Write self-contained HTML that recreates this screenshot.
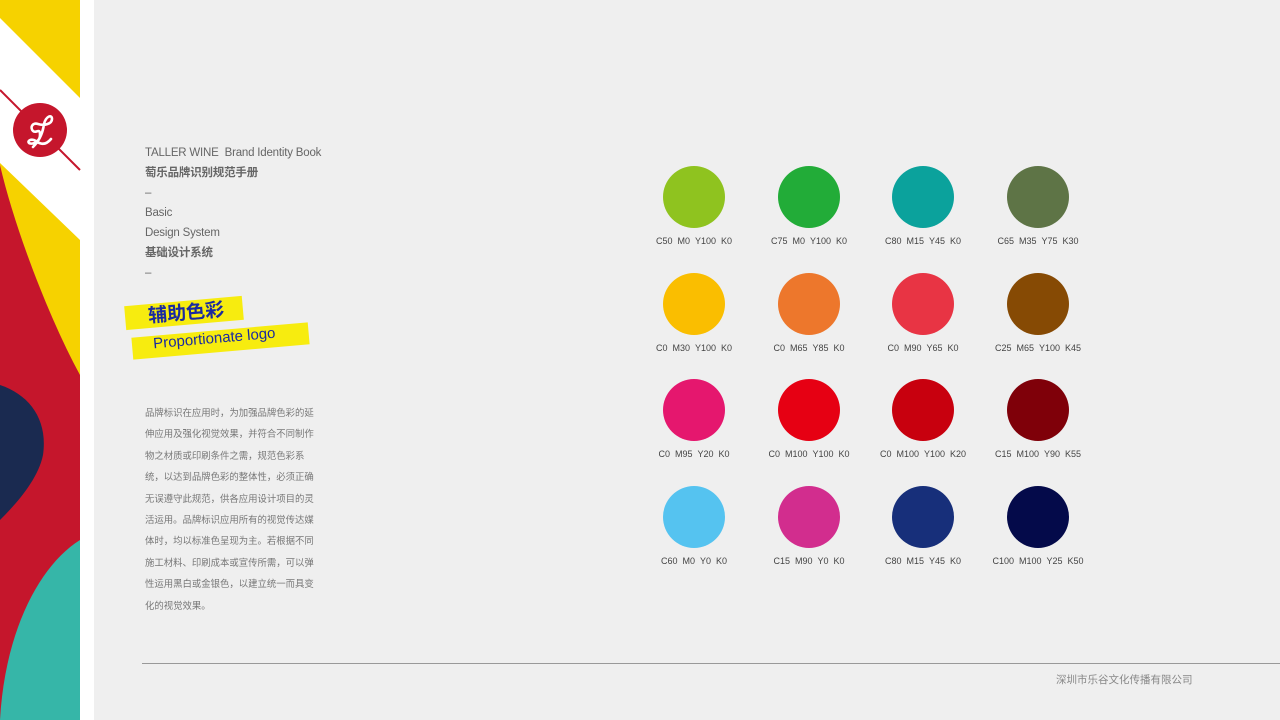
<!DOCTYPE html>
<html><head><meta charset="utf-8"><style>
body{margin:0;width:1280px;height:720px;background:#efefef;position:relative;overflow:hidden;font-family:"Liberation Sans","Noto Sans CJK SC",sans-serif}
.t{position:absolute;left:145px;font-size:11.5px;color:#666;line-height:20px;letter-spacing:-0.2px}
.c{position:absolute;width:62px;height:62px;border-radius:50%}
.l{position:absolute;font-size:9px;color:#444;width:120px;text-align:center;white-space:nowrap}
</style></head><body>
<svg width="94" height="720" style="position:absolute;left:0;top:0">
<rect width="94" height="720" fill="#fff"/>
<rect width="80" height="720" fill="#c5162c"/>
<path d="M0 0H80V375C50 320 15 230 0 165Z" fill="#f6d200"/>
<path d="M0 18L80 98V240L0 163Z" fill="#fff"/>
<line x1="0" y1="90" x2="80" y2="170" stroke="#c5162c" stroke-width="2"/>
<circle cx="40" cy="130" r="27" fill="#c5162c"/>
<path d="M33 147C40 140 43 132 44 124C46 116 52 114 52 119C52 124 44 126 38 124C32 122 30 128 33 131C36 134 40 127 40 135C40 142 32 145 29 143C27 141 31 138 36 141C41 145 46 145 51 139" fill="none" stroke="#fff" stroke-width="2.6" stroke-linecap="round"/>
<path d="M0 385C30 395 48 420 43 455C38 480 15 505 0 520Z" fill="#1a2a50"/>
<path d="M80 540C40 565 5 630 0 720H80Z" fill="#36b6a8"/>
</svg>
<div class="t" style="top:143px">TALLER WINE&nbsp; Brand Identity Book</div>
<div class="t" style="top:163px;font-weight:bold">萄乐品牌识别规范手册</div>
<div class="t" style="top:183px">–</div>
<div class="t" style="top:203px">Basic</div>
<div class="t" style="top:223px">Design System</div>
<div class="t" style="top:243px;font-weight:bold">基础设计系统</div>
<div class="t" style="top:263px">–</div>
<div style="position:absolute;left:125px;top:301px;width:118px;height:24px;background:#f7ec0f;transform:rotate(-5deg)"></div>
<div style="position:absolute;left:148px;top:298px;font-size:19px;font-weight:bold;color:#1a2aa0;transform:rotate(-5deg)">辅助色彩</div>
<div style="position:absolute;left:132px;top:330px;width:177px;height:22px;background:#f7ec0f;transform:rotate(-5deg)"></div>
<div style="position:absolute;left:153px;top:330px;font-size:15px;color:#1a2aa0;transform:rotate(-5deg)">Proportionate logo</div>
<div style="position:absolute;left:145px;top:402px;width:172px;font-size:9.4px;line-height:21.4px;color:#777">品牌标识在应用时，为加强品牌色彩的延伸应用及强化视觉效果，并符合不同制作物之材质或印刷条件之需，规范色彩系统，以达到品牌色彩的整体性，必须正确无误遵守此规范，供各应用设计项目的灵活运用。品牌标识应用所有的视觉传达媒体时，均以标准色呈现为主。若根据不同施工材料、印刷成本或宣传所需，可以弹性运用黑白或金银色，以建立统一而具变化的视觉效果。</div>
<div style="position:absolute;left:142px;top:663px;width:1138px;height:1px;background:#999"></div>
<div style="position:absolute;left:1056px;top:672px;font-size:10.5px;color:#888">深圳市乐谷文化传播有限公司</div>
<div id="g"></div>
<script>
var d=[["#8fc31f","C50  M0  Y100  K0"],["#22ac38","C75  M0  Y100  K0"],["#0ba29c","C80  M15  Y45  K0"],["#5e7446","C65  M35  Y75  K30"],
["#fabe00","C0  M30  Y100  K0"],["#ed772c","C0  M65  Y85  K0"],["#e83444","C0  M90  Y65  K0"],["#864a04","C25  M65  Y100  K45"],
["#e5176e","C0  M95  Y20  K0"],["#e60013","C0  M100  Y100  K0"],["#c8000e","C0  M100  Y100  K20"],["#7f0009","C15  M100  Y90  K55"],
["#55c3f0","C60  M0  Y0  K0"],["#d22d8e","C15  M90  Y0  K0"],["#172f7a","C80  M15  Y45  K0"],["#040a4a","C100  M100  Y25  K50"]];
var xs=[694,809,923,1038],ys=[197,304,410,517],h="";
d.forEach(function(v,i){var x=xs[i%4],y=ys[Math.floor(i/4)];
h+='<div class="c" style="left:'+(x-31)+'px;top:'+(y-31)+'px;background:'+v[0]+'"></div><div class="l" style="left:'+(x-60)+'px;top:'+(y+39)+'px">'+v[1].replace(/ /g,'&nbsp;')+'</div>';});
document.getElementById('g').innerHTML=h;
</script>
</body></html>
